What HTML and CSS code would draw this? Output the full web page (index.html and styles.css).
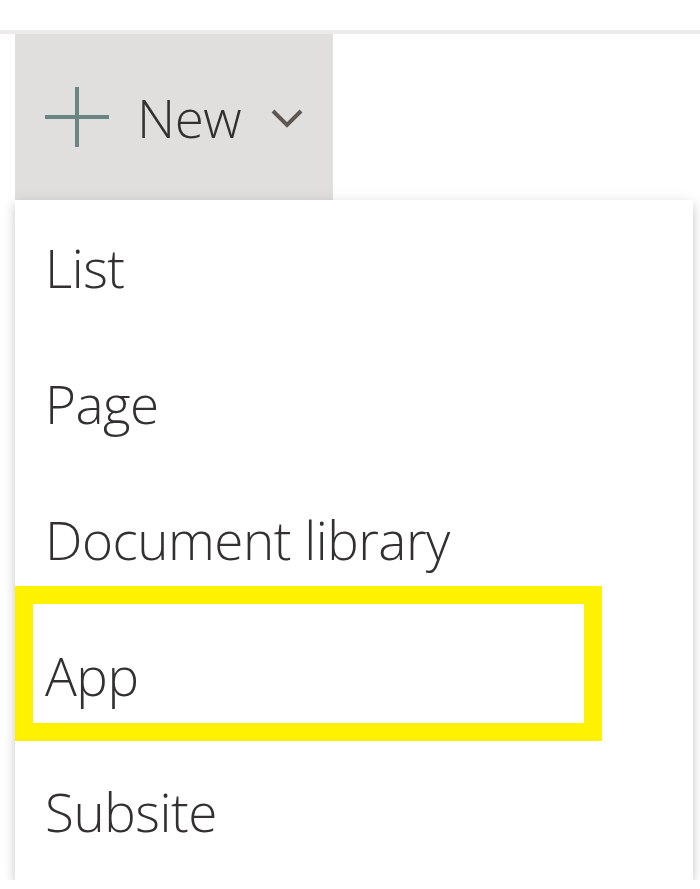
FILE: index.html
```html
<!doctype html>
<html>
  <head>
    <title>New menu</title>
    <meta name="viewport" content="width=device-width,initial-scale=1.0"/>
    <meta charset="utf-8"/>
    <link rel="stylesheet" href="styles.css">
  </head>
  <body>
    <div class="topbar"></div>
    <div class="cmdbar">
      <button class="newbtn">
        <svg class="plus" width="64" height="60" viewBox="0 0 64 60"><path d="M0 30H64M32 0V60" stroke="#6a8683" stroke-width="4" fill="none"/></svg>
        <span class="label">New</span>
        <svg class="chev" width="32" height="20" viewBox="0 0 32 20"><path d="M2 3L16 17L30 3" stroke="#5e5650" stroke-width="4" fill="none"/></svg>
      </button>
    </div>
    <div class="menu">
      <ul>
        <li>List</li>
        <li>Page</li>
        <li>Document library</li>
        <li>App</li>
        <li>Subsite</li>
      </ul>
      <div class="mark"></div>
    </div>
  </body>
</html>
```

FILE: styles.css
```css
*{
  font-family:"Open Sans",sans-serif;
  box-sizing:border-box;
}
html,body{
  margin:0;
  padding:0;
  background:#fff;
  overflow:hidden;
}
.topbar{
  height:34px;
  border-bottom:4px solid #edebe9;
}
.cmdbar{
  height:166px;
  padding-left:15px;
  display:flex;
}
.newbtn{
  display:flex;
  align-items:center;
  height:100%;
  width:318px;
  padding:0 0 0 30px;
  border:none;
  background:#e1dfdd;
  color:#323130;
  font-size:53px;
  font-weight:300;
}
.newbtn .label{
  margin:0 30px 0 28px;
  letter-spacing:-0.5px;
}
.chev{
  margin-top:2px;
}
.menu{
  position:relative;
  margin-left:15px;
  width:678px;
  background:#fff;
  box-shadow:0 6px 10px rgba(0,0,0,.16),0 0 14px rgba(0,0,0,.07);
}
.menu ul{
  list-style:none;
  margin:0;
  padding:0;
}
.menu li{
  height:136px;
  line-height:136px;
  padding-left:30px;
  font-size:53px;
  font-weight:300;
  letter-spacing:-0.5px;
  color:#323130;
}
.mark{
  position:absolute;
  left:0;
  top:386px;
  width:587px;
  height:155px;
  border:18px solid #fff200;
}
```
